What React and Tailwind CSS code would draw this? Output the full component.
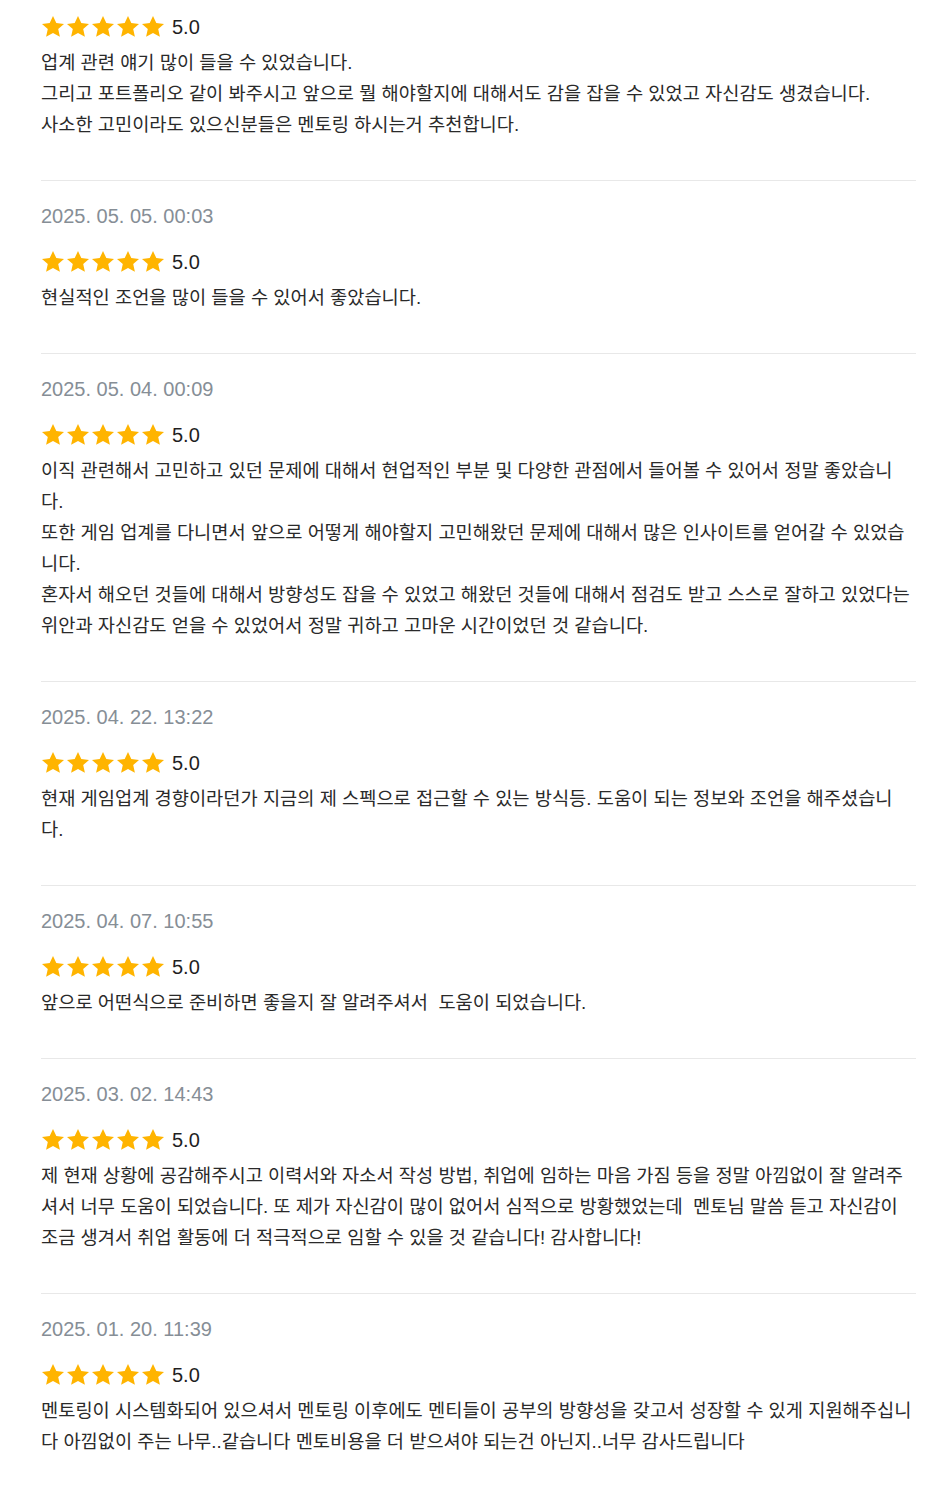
import React from 'react';

const reviews = [
  {
    date: null,
    body: '업계 관련 얘기 많이 들을 수 있었습니다.\n그리고 포트폴리오 같이 봐주시고 앞으로 뭘 해야할지에 대해서도 감을 잡을 수 있었고 자신감도 생겼습니다.\n사소한 고민이라도 있으신분들은 멘토링 하시는거 추천합니다.',
  },
  { date: '2025. 05. 05. 00:03', body: '현실적인 조언을 많이 들을 수 있어서 좋았습니다.' },
  {
    date: '2025. 05. 04. 00:09',
    body: '이직 관련해서 고민하고 있던 문제에 대해서 현업적인 부분 및 다양한 관점에서 들어볼 수 있어서 정말 좋았습니다.\n또한 게임 업계를 다니면서 앞으로 어떻게 해야할지 고민해왔던 문제에 대해서 많은 인사이트를 얻어갈 수 있었습니다.\n혼자서 해오던 것들에 대해서 방향성도 잡을 수 있었고 해왔던 것들에 대해서 점검도 받고 스스로 잘하고 있었다는 위안과 자신감도 얻을 수 있었어서 정말 귀하고 고마운 시간이었던 것 같습니다.',
  },
  {
    date: '2025. 04. 22. 13:22',
    body: '현재 게임업계 경향이라던가 지금의 제 스펙으로 접근할 수 있는 방식등. 도움이 되는 정보와 조언을 해주셨습니다.',
  },
  { date: '2025. 04. 07. 10:55', body: '앞으로 어떤식으로 준비하면 좋을지 잘 알려주셔서  도움이 되었습니다.' },
  {
    date: '2025. 03. 02. 14:43',
    body: '제 현재 상황에 공감해주시고 이력서와 자소서 작성 방법, 취업에 임하는 마음 가짐 등을 정말 아낌없이 잘 알려주셔서 너무 도움이 되었습니다. 또 제가 자신감이 많이 없어서 심적으로 방황했었는데  멘토님 말씀 듣고 자신감이 조금 생겨서 취업 활동에 더 적극적으로 임할 수 있을 것 같습니다! 감사합니다!',
  },
  {
    date: '2025. 01. 20. 11:39',
    body: '멘토링이 시스템화되어 있으셔서 멘토링 이후에도 멘티들이 공부의 방향성을 갖고서 성장할 수 있게 지원해주십니다 아낌없이 주는 나무..같습니다 멘토비용을 더 받으셔야 되는건 아닌지..너무 감사드립니다',
  },
];

function Star() {
  return (
    <svg viewBox="0 0 24 24" className="w-[24px] h-[24px]" fill="#ffb400">
      <path d="M12 1l3.3 7.1 7.7.8-5.8 5.2 1.7 7.7L12 17.9l-6.9 3.9 1.7-7.7L1 8.9l7.7-.8z" />
    </svg>
  );
}

function Stars() {
  return (
    <div className="flex items-center h-[28px]">
      <div className="flex gap-[1px]">
        <Star />
        <Star />
        <Star />
        <Star />
        <Star />
      </div>
      <span className="ml-[7px] text-[20px] leading-none font-medium text-[#1f1f1f]">5.0</span>
    </div>
  );
}

export default function App() {
  return (
    <div className="min-h-screen bg-white pl-[41px] pr-[32px] font-['Liberation_Sans','Noto_Sans_CJK_KR',sans-serif]">
      {reviews.map((r, i) => (
        <div
          key={i}
          className={`pb-[40px] ${i === 0 ? 'pt-[13px]' : 'pt-[23px]'} ${i < reviews.length - 1 ? 'border-b border-[#e8e8e8]' : ''}`}
        >
          {r.date && (
            <div className="text-[20px] leading-[24px] text-[#868e96] mb-[20px]">{r.date}</div>
          )}
          <Stars />
          <p className="mt-[6px] pr-[2.5px] text-[18.7px] leading-[31px] text-[#2a2a2a] whitespace-pre-wrap break-all">
            {r.body}
          </p>
        </div>
      ))}
    </div>
  );
}
